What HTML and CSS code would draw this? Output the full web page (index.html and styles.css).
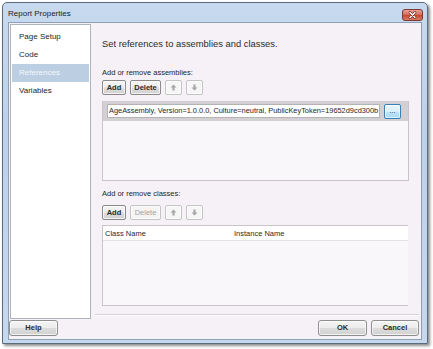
FILE: index.html
```html
<!DOCTYPE html>
<html>
<head>
<meta charset="utf-8">
<link rel="stylesheet" href="styles.css">
</head>
<body>
<div class="window">
  <div class="titlebar">
    <span class="title">Report Properties</span>
    <span class="close">
      <svg width="21" height="12" viewBox="0 0 21 12">
        <defs>
          <linearGradient id="cg" x1="0" y1="0" x2="0" y2="1">
            <stop offset="0" stop-color="#e9a79c"/>
            <stop offset="0.45" stop-color="#d8705f"/>
            <stop offset="0.5" stop-color="#c2462f"/>
            <stop offset="1" stop-color="#d9826c"/>
          </linearGradient>
        </defs>
        <rect x="0.5" y="0.5" width="20" height="11" rx="2.5" fill="url(#cg)" stroke="#7d3a33"/>
        <path d="M8 3.5 L13 8.5 M13 3.5 L8 8.5" stroke="#6a2a22" stroke-width="2.6" stroke-linecap="round"/>
        <path d="M8 3.5 L13 8.5 M13 3.5 L8 8.5" stroke="#ffffff" stroke-width="1.4" stroke-linecap="round"/>
      </svg>
    </span>
  </div>
  <div class="client">
    <div class="main">
      <nav class="nav">
        <div class="nav-item">Page Setup</div>
        <div class="nav-item">Code</div>
        <div class="nav-item selected">References</div>
        <div class="nav-item">Variables</div>
      </nav>
      <section class="content">
        <div class="heading">Set references to assemblies and classes.</div>
        <div class="label label-asm">Add or remove assemblies:</div>
        <div class="toolbar">
          <button class="btn btn-add">Add</button>
          <button class="btn btn-del">Delete</button>
          <button class="btn btn-arrow" aria-label="Move up">
            <svg width="7" height="7" viewBox="0 0 7 7"><polygon points="3.5,0.5 6.5,3.5 4.6,3.5 4.6,6.5 2.4,6.5 2.4,3.5 0.5,3.5" fill="#a8a8a8"/></svg>
          </button>
          <button class="btn btn-arrow" aria-label="Move down">
            <svg width="7" height="7" viewBox="0 0 7 7"><polygon points="3.5,6.5 6.5,3.5 4.6,3.5 4.6,0.5 2.4,0.5 2.4,3.5 0.5,3.5" fill="#a8a8a8"/></svg>
          </button>
        </div>
        <div class="asm-list">
          <div class="asm-row">
            <div class="asm-field">AgeAssembly, Version=1.0.0.0, Culture=neutral, PublicKeyToken=19652d9cd300b</div>
            <button class="dots">...</button>
          </div>
        </div>
        <div class="label label-cls">Add or remove classes:</div>
        <div class="toolbar">
          <button class="btn btn-add">Add</button>
          <button class="btn btn-del disabled">Delete</button>
          <button class="btn btn-arrow" aria-label="Move up">
            <svg width="7" height="7" viewBox="0 0 7 7"><polygon points="3.5,0.5 6.5,3.5 4.6,3.5 4.6,6.5 2.4,6.5 2.4,3.5 0.5,3.5" fill="#a8a8a8"/></svg>
          </button>
          <button class="btn btn-arrow" aria-label="Move down">
            <svg width="7" height="7" viewBox="0 0 7 7"><polygon points="3.5,6.5 6.5,3.5 4.6,3.5 4.6,0.5 2.4,0.5 2.4,3.5 0.5,3.5" fill="#a8a8a8"/></svg>
          </button>
        </div>
        <div class="cls-table">
          <div class="cls-head">
            <span class="col col-class">Class Name</span>
            <span class="col col-inst">Instance Name</span>
          </div>
        </div>
        <div class="separator"></div>
      </section>
    </div>
    <div class="footer">
      <button class="btn fbtn btn-help">Help</button>
      <div class="spacer"></div>
      <button class="btn fbtn btn-ok">OK</button>
      <button class="btn fbtn btn-cancel">Cancel</button>
    </div>
  </div>
</div>
</body>
</html>
```

FILE: styles.css
```css
html, body {
  margin: 0;
  padding: 0;
  background: #ffffff;
}
body {
  width: 433px;
  height: 349px;
  overflow: hidden;
  font-family: "Liberation Sans", Arial, sans-serif;
  color: #1e1e1e;
}
.window {
  margin: 2px 0 0 2px;
  border: 1px solid #5b6b7c;
  border-radius: 5px 5px 0 0;
  background: linear-gradient(#c7d9ee, #bcd1ea 40%, #c6d8ee);
  box-shadow: 2px 2px 3px rgba(0, 0, 0, 0.45);
  display: flex;
  flex-direction: column;
  padding: 0 5px 3px 5px;
  box-sizing: content-box;
  width: 414px;
  height: 337px;
}
.titlebar {
  height: 19px;
  display: flex;
  align-items: center;
  justify-content: space-between;
  flex: none;
}
.title {
  font-size: 8px;
  color: #1c1c1c;
  margin-top: 2px;
}
.close {
  display: flex;
  margin-top: 5px;
  margin-right: -1px;
}
.client {
  flex: 1;
  border: 1px solid #8d9fb3;
  background: #f6f1f6;
  display: flex;
  flex-direction: column;
}
.main {
  display: flex;
  gap: 4px;
  padding: 1px 0 0 1px;
  height: 292px;
  flex: none;
}
.nav {
  width: 79px;
  height: 290px;
  background: #ffffff;
  border: 1px solid #aeb4bb;
  padding-top: 3px;
  box-sizing: content-box;
  flex: none;
}
.nav-item {
  height: 18px;
  line-height: 18px;
  font-size: 8px;
  padding-left: 7px;
  color: #1e1e1e;
  margin: 0 1px;
}
.nav-item.selected {
  background: #bccfe2;
  color: #f2f6fa;
}
.content {
  flex: 1;
  display: flex;
  flex-direction: column;
  padding-left: 7px;
}
.heading {
  margin-top: 13px;
  height: 14px;
  line-height: 14px;
  font-size: 9.4px;
  color: #2a2a2a;
}
.label {
  font-size: 7.5px;
  height: 11px;
  line-height: 11px;
  color: #1e1e1e;
}
.label-asm {
  margin-top: 16px;
}
.label-cls {
  margin-top: 7px;
}
.toolbar {
  display: flex;
  gap: 4px;
  margin-top: 2px;
  height: 15px;
}
.label-cls + .toolbar {
  margin-top: 6px;
}
.btn {
  font-family: "Liberation Sans", Arial, sans-serif;
  font-size: 7.5px;
  font-weight: bold;
  color: #2a2a2a;
  height: 15px;
  padding: 0;
  margin: 0;
  border: 1px solid #8a8a8a;
  border-radius: 2px;
  background: linear-gradient(#f4f4f4 0%, #ececec 48%, #dcdcdc 52%, #d2d2d2 100%);
  box-shadow: inset 0 0 0 1px rgba(255, 255, 255, 0.7);
  display: flex;
  align-items: center;
  justify-content: center;
}
.btn-add { width: 24px; }
.btn-del { width: 31px; }
.btn-del.disabled {
  color: #a4a4a4;
  font-weight: normal;
  border-color: #c4c4c4;
  background: #f4f4f4;
}
.btn-arrow {
  width: 17px;
  border-color: #c4c4c4;
  background: #f6f6f6;
}
.asm-list {
  margin-top: 6px;
  width: 305px;
  height: 81px;
  border: 1px solid #c8c4c8;
  border-top: none;
  background: #f9f7f9;
}
.asm-row {
  height: 20px;
  background: #d2d0d2;
  display: flex;
  align-items: center;
  padding-left: 4px;
  gap: 4px;
}
.asm-field {
  width: 270px;
  height: 12px;
  background: #ffffff;
  border: 1px solid #b4b4b4;
  font-size: 7.4px;
  line-height: 12px;
  padding-left: 1px;
  white-space: nowrap;
  overflow: hidden;
  color: #1e1e1e;
}
.dots {
  width: 17px;
  height: 15px;
  padding: 0;
  margin: 0;
  border: 1px solid #3c7fb1;
  border-radius: 2px;
  background: linear-gradient(#eaf6fd, #d9f0fc 50%, #bee6fd 52%, #a7d9f5);
  box-shadow: inset 0 0 0 1px rgba(255, 255, 255, 0.6);
  font-size: 7px;
  font-family: "Liberation Sans", Arial, sans-serif;
  color: #222;
  line-height: 10px;
}
.cls-table {
  margin-top: 5px;
  width: 305px;
  height: 80px;
  border: 1px solid #c8c4c8;
  border-right: none;
  background: #f9f7f9;
}
.cls-head {
  height: 14px;
  background: #ffffff;
  border-bottom: 1px solid #e4e2e4;
  display: flex;
  align-items: center;
  font-size: 7.5px;
  color: #2a2a2a;
}
.col-class {
  width: 129px;
  padding-left: 2px;
}
.separator {
  margin-top: 8px;
  margin-left: -7px;
  width: 324px;
  height: 0;
  border-top: 1px solid #d5d2d5;
  border-bottom: 1px solid #ffffff;
}
.footer {
  flex: 1;
  display: flex;
  align-items: center;
  padding: 0 2px 0 0;
  gap: 4px;
}
.spacer { flex: 1; }
.fbtn {
  height: 16px;
  border-color: #8e8e8e;
  border-radius: 3px;
  font-size: 7.5px;
}
.btn-help { width: 49px; }
.btn-ok { width: 49px; }
.btn-cancel { width: 48px; }
```
